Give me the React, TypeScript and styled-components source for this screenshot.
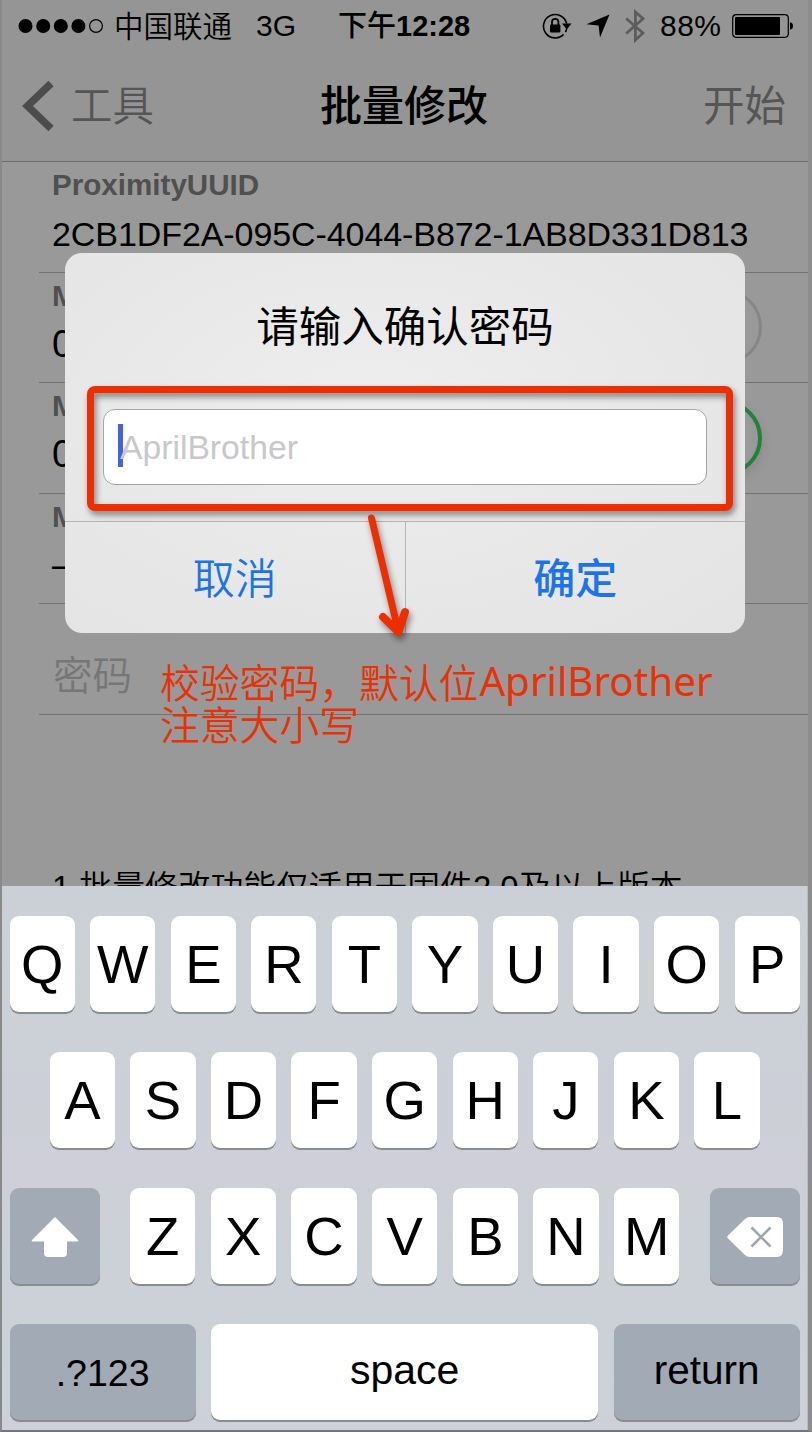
import React from "react";
import styled, { createGlobalStyle } from "styled-components";

const GlobalStyle = createGlobalStyle`
  * { box-sizing: border-box; }
  body {
    margin: 0;
    background: #8c8c8c;
    font-family: "Liberation Sans", "Noto Sans CJK SC", sans-serif;
    color: #000;
  }
`;

const Phone = styled.div`
  position: relative;
  display: flex;
  flex-direction: column;
  width: 812px;
  height: 1432px;
  border-left: 2px solid #898989;
  border-right: 4px solid #8d8d8d;
  border-bottom: 2px solid #74767a;
  background: #999;
  overflow: hidden;
`;

const Header = styled.header`
  flex: none;
  height: 162px;
  background: #959595;
  border-bottom: 1px solid #6c6c6c;
`;

const StatusBar = styled.div`
  display: flex;
  align-items: center;
  height: 52px;
  padding-left: 16px;
  font-size: 29.5px;
  line-height: 52px;
  white-space: nowrap;
`;

const Signal = styled.svg`
  width: 86px;
  height: 20px;
`;

const Carrier = styled.span`
  margin-left: 10px;
  padding-top: 2px;
  font-size: 29.5px;
  font-weight: 350;
`;

const Network = styled.span`
  margin-left: 24px;
  font-size: 30px;
`;

const Clock = styled.span`
  margin-left: 42px;
  font-size: 29px;
  font-weight: 700;
  span { font-weight: 500; }
`;

const StatusIcons = styled.div`
  display: flex;
  align-items: center;
  margin-left: auto;
  padding-right: 14px;
  svg { display: block; }
`;

const ArrowIcon = styled.svg`
  margin-left: 14.5px;
`;

const Percent = styled.span`
  margin: 0 10.5px 0 15px;
  font-size: 30px;
  letter-spacing: 0.5px;
`;

const NavBar = styled.nav`
  display: grid;
  grid-template-columns: 1fr auto 1fr;
  align-items: center;
  height: 108px;
  padding: 0 22px 0 20px;
`;

const NavButton = styled.div<{ $end?: boolean }>`
  display: flex;
  align-items: center;
  gap: 17px;
  justify-content: ${(p) => (p.$end ? "flex-end" : "flex-start")};
  font-size: 41.5px;
  font-weight: ${(p) => (p.$end ? 400 : 350)};
  line-height: 52px;
  color: #555;
  span { padding-top: 2px; }
`;

const NavTitle = styled.h1`
  margin: 0;
  padding-top: 2px;
  font-size: 42px;
  line-height: 52px;
  font-weight: 500;
`;

const List = styled.main`
  flex: 1;
  min-height: 0;
  overflow: hidden;
`;

const Row = styled.section`
  display: flex;
  justify-content: space-between;
  align-items: center;
  height: 110.6px;
  margin-left: 37px;
  padding: 0 46px 0 13px;
  border-bottom: 1px solid #737373;
`;

const Field = styled.div`
  align-self: flex-start;
  padding-top: 7px;
`;

const Label = styled.div`
  font-size: 29.6px;
  font-weight: 700;
  line-height: 32px;
  color: #505050;
`;

const Value = styled.div<{ $large?: boolean }>`
  margin-top: ${(p) => (p.$large ? 12 : 13)}px;
  font-size: ${(p) => (p.$large ? 38 : 34)}px;
  line-height: 40px;
  letter-spacing: -0.08px;
  white-space: nowrap;
`;

const EmptyValue = styled.div`
  padding: 27px 0 0 1px;
  font-size: 39.5px;
  font-weight: 350;
  color: #767676;
`;

const Toggle = styled.div<{ $on?: boolean }>`
  width: 128px;
  height: 76px;
  border-radius: 38px;
  border: ${(p) => (p.$on ? "4px solid #23813a" : "3px solid #868686")};
  box-shadow: ${(p) => (p.$on ? "0 5px 12px rgba(0, 0, 0, 0.12)" : "none")};
`;

const Note = styled.p`
  margin: 148px 0 0 50px;
  font-size: 32.8px;
  line-height: 50px;
  font-weight: 350;
  white-space: nowrap;
`;

const Keyboard = styled.div`
  flex: none;
  display: flex;
  flex-direction: column;
  gap: 40px;
  height: 544px;
  padding: 30px 7.3px 0 7.6px;
  background: linear-gradient(180deg, #cad0d5 0%, #ccd1d6 22%, #cccfd7 35%, #cecfd8 52%, #cbd1d6 72%, #cdd0d8 100%);
  border-right: 1px solid #b9bcc2;
`;

const KeyRow = styled.div<{ $inset?: boolean }>`
  display: flex;
  gap: 15.3px;
  height: 96px;
  padding: 0 ${(p) => (p.$inset ? 40.2 : 0)}px;
`;

const Key = styled.div<{ $dark?: boolean; $width?: number }>`
  display: flex;
  align-items: center;
  justify-content: center;
  flex: ${(p) => (p.$width ? `0 0 ${p.$width}px` : "1 1 0")};
  height: 96px;
  padding-top: 1px;
  border-radius: 9px;
  background: ${(p) => (p.$dark ? "#a1aab5" : "#fff")};
  box-shadow: 0 2px 0 #898c91;
  font-size: 54.5px;
`;

const LetterGroup = styled.div`
  display: flex;
  flex: 1;
  gap: 15.3px;
  margin: 0 15px;
`;

const KeyLabel = styled.span<{ $size: number; $lift?: boolean }>`
  font-size: ${(p) => p.$size}px;
  padding-top: ${(p) => (p.$lift ? 0 : 2)}px;
  padding-bottom: ${(p) => (p.$lift ? 4 : 0)}px;
`;

const Dialog = styled.div`
  position: absolute;
  left: 63px;
  top: 253px;
  display: flex;
  flex-direction: column;
  width: 680px;
  height: 380px;
  border-radius: 17px;
  background: radial-gradient(ellipse at 45% 42%, #eeeeee 0%, #e9e9e9 45%, #e2e3e2 100%);
  overflow: hidden;
`;

const DialogTitle = styled.h2`
  margin: 0;
  padding-top: 44px;
  height: 156px;
  font-size: 42.5px;
  line-height: 62px;
  font-weight: 400;
  text-align: center;
`;

const PasswordField = styled.div`
  display: flex;
  align-items: center;
  height: 76px;
  margin: 0 38px;
  padding-left: 14px;
  border: 1px solid #a3a6a4;
  border-radius: 12px;
  background: #fff;
`;

const Caret = styled.i`
  width: 5px;
  height: 43px;
  margin: 0 -3px 3px 0;
  background: #4262ec;
`;

const Placeholder = styled.span`
  font-size: 33.7px;
  color: #c8c8cb;
`;

const Actions = styled.div`
  display: flex;
  flex: 1;
  margin-top: 36px;
  border-top: 1px solid #b3b6b5;
`;

const Action = styled.div<{ $primary?: boolean }>`
  display: flex;
  flex: 1;
  align-items: center;
  justify-content: center;
  padding-bottom: 4px;
  font-size: 42px;
  font-weight: ${(p) => (p.$primary ? 500 : 350)};
  color: #1b74ee;
  border-left: ${(p) => (p.$primary ? "1px solid #b3b6b5" : "none")};
`;

const Highlight = styled.div`
  position: absolute;
  left: 85px;
  top: 386px;
  width: 646px;
  height: 125px;
  border: 7px solid #ef2e00;
  border-radius: 8px;
  filter: drop-shadow(2px 4px 3px rgba(0, 0, 0, 0.45));
`;

const Arrow = styled.svg`
  position: absolute;
  left: 358px;
  top: 506px;
  filter: drop-shadow(2px 4px 3px rgba(0, 0, 0, 0.45));
`;

const Annotation = styled.div`
  position: absolute;
  left: 158px;
  top: 660px;
  font-family: "Noto Sans CJK SC", sans-serif;
  font-size: 39.8px;
  font-weight: 350;
  color: #e83206;
  white-space: nowrap;
`;

const AnnotationLine = styled.div`
  display: flex;
  align-items: center;
  height: 42px;
  line-height: 42px;
`;

const Latin = styled.span`
  margin-left: 1px;
  font-family: "Noto Sans", sans-serif;
  font-size: 40.3px;
  font-weight: 400;
`;

const StatusBarContent = () => (
  <StatusBar>
    <Signal viewBox="0 0 86 20">
      {[7.5, 25.2, 42.8, 60.4].map((x) => (
        <circle key={x} cx={x} cy="10" r="7" />
      ))}
      <circle cx="78" cy="10" r="6.4" fill="none" stroke="#000" strokeWidth="1.2" />
    </Signal>
    <Carrier>中国联通</Carrier>
    <Network>3G</Network>
    <Clock><span>下午</span>12:28</Clock>
    <StatusIcons>
      <svg width="30" height="28" viewBox="0 0 30 28">
        <path d="M21.600 22.400A11.700 11.700 0 1 1 24.600 11.500" fill="none" stroke="#000" strokeWidth="1.600" />
        <path d="M24.600 17a12 12 0 0 1-1.200 3.200" fill="none" stroke="#000" strokeWidth="1.600" />
        <path d="M20 11.600h9.600l-4.800 5.800z" />
        <rect x="8" y="12.600" width="10.400" height="7.800" rx="0.800" />
        <path d="M10 13V10a3.200 3.200 0 0 1 6.400 0v3" fill="none" stroke="#000" strokeWidth="1.700" />
      </svg>
      <ArrowIcon width="24" height="24" viewBox="0 0 24 24">
        <path d="M23.500 0.500L14 23.500L12.600 11.600L0.500 10.200Z" />
      </ArrowIcon>
      <ArrowIcon width="20" height="34" viewBox="0 0 20 34">
        <path d="M1.200 9.500L18 24L10.400 31V3L18 9.700L1.200 24.500" fill="none" stroke="#5c5c5c" strokeWidth="2.800" />
      </ArrowIcon>
      <Percent>88%</Percent>
      <svg width="62" height="24" viewBox="0 0 62 24">
        <rect x="0.700" y="0.700" width="55.600" height="22.600" rx="3.500" fill="none" stroke="#000" strokeWidth="1.200" />
        <rect x="3" y="3" width="45" height="18" rx="1" />
        <path d="M58 8.200q3 .6 3 3.800t-3 3.800z" />
      </svg>
    </StatusIcons>
  </StatusBar>
);

const smallRows = [
  { id: "r1", value: "0", toggle: "off" },
  { id: "r2", value: "0", toggle: "on" },
  { id: "r3", value: "–", toggle: "" },
];

export default function App() {
  return (
    <>
      <GlobalStyle />
      <Phone>
        <Header>
          <StatusBarContent />
          <NavBar>
            <NavButton>
              <svg width="32" height="52" viewBox="0 0 32 52">
                <path d="M29 3.500L5.500 26L29 48.500" fill="none" stroke="#4c4c4c" strokeWidth="7.500" />
              </svg>
              <span>工具</span>
            </NavButton>
            <NavTitle>批量修改</NavTitle>
            <NavButton $end><span>开始</span></NavButton>
          </NavBar>
        </Header>
        <List>
          <Row>
            <Field>
              <Label>ProximityUUID</Label>
              <Value>2CB1DF2A-095C-4044-B872-1AB8D331D813</Value>
            </Field>
          </Row>
          {smallRows.map((row) => (
            <Row key={row.id}>
              <Field>
                <Label>M</Label>
                <Value $large>{row.value}</Value>
              </Field>
              {row.toggle && <Toggle $on={row.toggle === "on"} />}
            </Row>
          ))}
          <Row>
            <EmptyValue>密码</EmptyValue>
          </Row>
          <Note>1.批量修改功能仅适用于固件2.0及以上版本</Note>
        </List>
        <Keyboard>
          <KeyRow>
            {[..."QWERTYUIOP"].map((k) => <Key key={k}>{k}</Key>)}
          </KeyRow>
          <KeyRow $inset>
            {[..."ASDFGHJKL"].map((k) => <Key key={k}>{k}</Key>)}
          </KeyRow>
          <KeyRow>
            <Key $dark $width={90}>
              <svg width="48" height="42" viewBox="0 0 48 42">
                <path d="M24 1L47 24q1 1.500-1 1.500H36V37q0 4-4 4H17q-4 0-4-4V25.500H2q-2 0-1-1.500z" fill="#fff" />
              </svg>
            </Key>
            <LetterGroup>
              {[..."ZXCVBNM"].map((k) => <Key key={k}>{k}</Key>)}
            </LetterGroup>
            <Key $dark $width={90}>
              <svg width="57" height="42" viewBox="0 0 57 42">
                <path d="M2 19.500L19 3Q21 1 24 1H51Q57 1 57 7V34Q57 41 51 41H24Q21 41 19 39L2 22.500Q.5 21 2 19.500z" fill="#fff" />
                <path d="M25.500 11.500L44.500 30.500M44.500 11.500L25.500 30.500" stroke="#9ea5ae" strokeWidth="2.600" />
              </svg>
            </Key>
          </KeyRow>
          <KeyRow>
            <Key $dark $width={186}><KeyLabel $size={37.5}>.?123</KeyLabel></Key>
            <Key><KeyLabel $size={41} $lift>space</KeyLabel></Key>
            <Key $dark $width={186}><KeyLabel $size={40.5} $lift>return</KeyLabel></Key>
          </KeyRow>
        </Keyboard>
        <Dialog>
          <DialogTitle>请输入确认密码</DialogTitle>
          <PasswordField>
            <Caret />
            <Placeholder>AprilBrother</Placeholder>
          </PasswordField>
          <Actions>
            <Action>取消</Action>
            <Action $primary>确定</Action>
          </Actions>
        </Dialog>
        <Highlight />
        <Arrow width="60" height="140" viewBox="0 0 60 140">
          <path d="M11.500 12L38.500 126" fill="none" stroke="#ef2e00" strokeWidth="7" strokeLinecap="round" />
          <path d="M23 111L38.500 126L45 106" fill="none" stroke="#ef2e00" strokeWidth="8" strokeLinecap="round" strokeLinejoin="round" />
        </Arrow>
        <Annotation>
          <AnnotationLine>校验密码，默认位<Latin>AprilBrother</Latin></AnnotationLine>
          <AnnotationLine>注意大小写</AnnotationLine>
        </Annotation>
      </Phone>
    </>
  );
}
